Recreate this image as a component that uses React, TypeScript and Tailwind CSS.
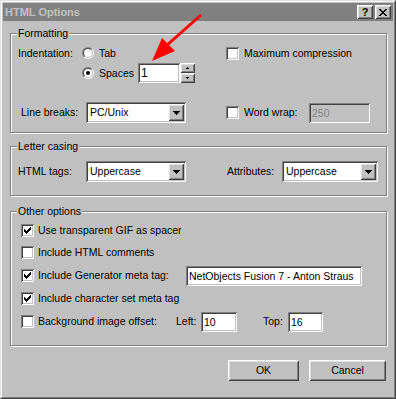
import React from "react";

const sunken =
  "shadow-[inset_1px_1px_0_#808080,inset_-1px_-1px_0_#ffffff,inset_2px_2px_0_#404040,inset_-2px_-2px_0_#c0c0c0]";
const raised =
  "shadow-[inset_1px_1px_0_#ffffff,inset_-1px_-1px_0_#404040,inset_2px_2px_0_#dfdfdf,inset_-2px_-2px_0_#808080]";

function Pixels({ rows, color = "#000" }: { rows: string[]; color?: string }) {
  const w = rows[0].length;
  const h = rows.length;
  const rects: React.ReactElement[] = [];
  rows.forEach((r, y) =>
    r.split("").forEach((c, x) => {
      if (c === "X") rects.push(<rect key={`${x}-${y}`} x={x} y={y} width={1} height={1} fill={color} />);
    })
  );
  return (
    <svg width={w} height={h} viewBox={`0 0 ${w} ${h}`} shapeRendering="crispEdges">
      {rects}
    </svg>
  );
}

const checkRows = ["......X", ".....XX", "X...XXX", "XX.XXX.", "XXXXX..", ".XXX...", "..X...."];
const downRows = ["XXXXXXX", ".XXXXX.", "..XXX..", "...X..."];
const smallUp = ["..X..", ".XXX."];
const smallDown = [".XXX.", "..X.."];
const closeRows = ["XX....XX", ".XX..XX.", "..XXXX..", "...XX...", "..XXXX..", ".XX..XX.", "XX....XX"];

function Check({ checked }: { checked?: boolean }) {
  return (
    <div className={`w-[13px] h-[13px] bg-white ${sunken} flex items-center justify-center shrink-0`}>
      {checked && <Pixels rows={checkRows} />}
    </div>
  );
}

function Radio({ checked }: { checked?: boolean }) {
  return (
    <div className="w-[12px] h-[12px] rounded-full border border-t-[#808080] border-l-[#808080] border-b-white border-r-white shrink-0">
      <div className="w-full h-full rounded-full border border-t-[#404040] border-l-[#404040] border-b-[#c0c0c0] border-r-[#c0c0c0] bg-white flex items-center justify-center">
        {checked && <div className="w-[4px] h-[4px] rounded-full bg-black" />}
      </div>
    </div>
  );
}

function Field({ value, className, disabled }: { value: string; className: string; disabled?: boolean }) {
  return (
    <div
      className={`${className} ${sunken} ${disabled ? "bg-[#c0c0c0] text-[#808080]" : "bg-white text-black"} flex items-center pl-[3px] pt-[1px] shrink-0 overflow-hidden whitespace-nowrap`}
    >
      {value}
    </div>
  );
}

function Combo({ value, className }: { value: string; className: string }) {
  return (
    <div className={`${className} h-[21px] bg-white ${sunken} p-[2px] flex shrink-0`}>
      <div className="flex-1 flex items-center pl-[2px]">{value}</div>
      <div className={`w-[16px] h-full bg-[#c0c0c0] ${raised} flex items-center justify-center`}>
        <Pixels rows={downRows} />
      </div>
    </div>
  );
}

function Group({ label, className, children }: { label: string; className: string; children: React.ReactNode }) {
  return (
    <div
      className={`relative w-[377px] border border-[#808080] shadow-[inset_1px_1px_0_#ffffff,1px_1px_0_#ffffff] ${className}`}
    >
      <span className="absolute -top-[8px] left-[6px] bg-[#c0c0c0] px-[1px] leading-[14px]">{label}</span>
      {children}
    </div>
  );
}

function Row({ className, children }: { className: string; children: React.ReactNode }) {
  return <div className={`flex items-center whitespace-nowrap ${className}`}>{children}</div>;
}

export default function App() {
  return (
    <div className="relative w-[396px] h-[399px] bg-[#c0c0c0] border border-t-[#dfdfdf] border-l-[#dfdfdf] border-b-[#404040] border-r-[#404040] font-['Liberation_Sans',Arial,sans-serif] text-[10.5px] leading-[13px] text-black select-none">
      <div className="h-full border border-t-white border-l-white border-b-[#808080] border-r-[#808080] p-px flex flex-col">
        {/* Title bar */}
        <div className="h-[18px] bg-[#808080] flex items-center pl-[2px] pr-[2px] shrink-0">
          <span className="flex-1 text-[#c0c0c0] font-bold text-[11px]">HTML Options</span>
          <div className={`w-[16px] h-[14px] bg-[#c0c0c0] ${raised} flex items-center justify-center font-bold text-[11px] leading-none pt-[1px]`}>
            ?
          </div>
          <div className={`ml-[2px] w-[16px] h-[14px] bg-[#c0c0c0] ${raised} flex items-center justify-center`}>
            <Pixels rows={closeRows} />
          </div>
        </div>

        {/* Body */}
        <div className="flex flex-col pl-[7px] pt-[12px]">
          <Group label="Formatting" className="pt-[9px] pb-[9px]">
            <Row className="h-[20px]">
              <div className="w-[215px] flex items-center">
                <span className="w-[71px] pl-[7px]">Indentation:</span>
                <Radio />
                <span className="ml-[5px]">Tab</span>
              </div>
              <Check />
              <span className="ml-[5px]">Maximum compression</span>
            </Row>
            <Row className="h-[20px] pl-[71px]">
              <Radio checked />
              <span className="ml-[5px] w-[39px]">Spaces</span>
              <Field value="1" className="w-[42px] h-[20px] text-[12px]" />
              <div className="w-[15px] h-[20px] flex flex-col">
                <div className={`h-[10px] bg-[#c0c0c0] ${raised} flex items-center justify-center`}>
                  <Pixels rows={smallUp} />
                </div>
                <div className={`h-[10px] bg-[#c0c0c0] ${raised} flex items-center justify-center`}>
                  <Pixels rows={smallDown} />
                </div>
              </div>
            </Row>
            <Row className="h-[21px] mt-[19px]">
              <div className="w-[215px] flex items-center">
                <span className="w-[75px] pl-[10px]">Line breaks:</span>
                <Combo value="PC/Unix" className="w-[100px]" />
              </div>
              <Check />
              <span className="ml-[5px] w-[65px]">Word wrap:</span>
              <Field value="250" className="w-[61px] h-[20px]" disabled />
            </Row>
          </Group>

          <Group label="Letter casing" className="mt-[13px] pt-[14px] pb-[13px]">
            <Row className="h-[21px]">
              <div className="w-[215px] flex items-center">
                <span className="w-[75px] pl-[7px]">HTML tags:</span>
                <Combo value="Uppercase" className="w-[100px]" />
              </div>
              <span className="w-[56px] pl-[1px]">Attributes:</span>
              <Combo value="Uppercase" className="w-[96px]" />
            </Row>
          </Group>

          <Group label="Other options" className="mt-[15px] pt-[7px] pb-[12px]">
            <Row className="h-[22px] pl-[10px]">
              <Check checked />
              <span className="ml-[4px]">Use transparent GIF as spacer</span>
            </Row>
            <Row className="h-[23px] pl-[10px]">
              <Check />
              <span className="ml-[4px]">Include HTML comments</span>
            </Row>
            <Row className="h-[23px] pl-[10px]">
              <Check checked />
              <span className="ml-[4px] w-[148px]">Include Generator meta tag:</span>
              <Field value="NetObjects Fusion 7 - Anton Straus" className="w-[176px] h-[20px]" />
            </Row>
            <Row className="h-[23px] pl-[10px]">
              <Check checked />
              <span className="ml-[4px]">Include character set meta tag</span>
            </Row>
            <Row className="h-[23px] pl-[10px]">
              <Check />
              <span className="ml-[4px] w-[138px]">Background image offset:</span>
              <span className="w-[25px]">Left:</span>
              <Field value="10" className="w-[36px] h-[20px]" />
              <span className="w-[51px] pl-[26px]">Top:</span>
              <Field value="16" className="w-[35px] h-[20px]" />
            </Row>
          </Group>

          <div className="flex mt-[14px] pl-[218px]">
            <div className={`w-[71px] h-[21px] bg-[#c0c0c0] ${raised} flex items-center justify-center`}>OK</div>
            <div className={`ml-[10px] w-[77px] h-[21px] bg-[#c0c0c0] ${raised} flex items-center justify-center`}>Cancel</div>
          </div>
        </div>
      </div>

      {/* Red annotation arrow */}
      <svg className="absolute left-0 top-0 pointer-events-none" width="396" height="399" viewBox="0 0 396 399">
        <line x1="200" y1="14" x2="165" y2="45" stroke="#ff0000" strokeWidth="3" />
        <polygon points="151,60 174,50 161,37" fill="#ff0000" />
      </svg>
    </div>
  );
}
